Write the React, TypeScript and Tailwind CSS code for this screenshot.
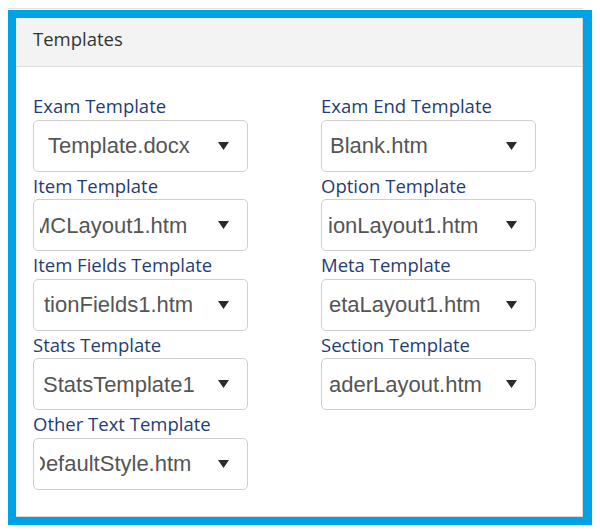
import React from "react";

type Field = {
  label: string;
  value: string;
  // nudge for the shown part of the file name, the box clips the rest
  shift: string;
};

const leftFields: Field[] = [
  { label: "Exam Template", value: "Template.docx", shift: "ml-[8px]" },
  { label: "Item Template", value: "MCLayout1.htm", shift: "ml-[-8px]" },
  { label: "Item Fields Template", value: "tionFields1.htm", shift: "ml-[4px]" },
  { label: "Stats Template", value: "StatsTemplate1", shift: "ml-[3px]" },
  { label: "Other Text Template", value: "DefaultStyle.htm", shift: "ml-[-10px]" },
];

const rightFields: Field[] = [
  { label: "Exam End Template", value: "Blank.htm", shift: "ml-[2px]" },
  { label: "Option Template", value: "ionLayout1.htm", shift: "ml-[0px]" },
  { label: "Meta Template", value: "etaLayout1.htm", shift: "ml-[1px]" },
  { label: "Section Template", value: "aderLayout.htm", shift: "ml-[1px]" },
];

const Caret = () => (
  <svg width="11" height="8" viewBox="0 0 11 8" className="shrink-0">
    <polygon points="0,0 11,0 5.5,8" fill="#2b2b2b" />
  </svg>
);

function TemplateSelect({ field }: { field: Field }) {
  return (
    <div className="flex flex-col">
      <div className="h-[27.5px] text-[18.5px] leading-[27.5px] text-[#1f3d73] font-['Open_Sans',sans-serif] whitespace-nowrap">
        {field.label}
      </div>
      <div className="flex h-[52px] w-[215px] items-center rounded-[5px] border border-[#cfcfcf] bg-white pl-[6px] pr-[18px]">
        <div className="flex w-[157px] overflow-hidden">
          <span
            className={`${field.shift} shrink-0 whitespace-nowrap text-[22px] text-[#555] font-['Liberation_Sans',Arial,sans-serif]`}
          >
            {field.value}
          </span>
        </div>
        <div className="ml-auto">
          <Caret />
        </div>
      </div>
    </div>
  );
}

export default function App() {
  return (
    <div className="h-[530px] w-[600px] bg-white pl-[8px] pt-[8px]">
      <div className="h-px w-[575px] bg-[#e2e2e2]" />
      <div className="mt-px h-[515px] w-[584px] border-[8px] border-r-[9px] border-[#00a2e6] bg-white">
        <div className="flex h-full flex-col border-r border-b border-[#d8d8d8]">
          <div className="h-[49px] border-b border-[#dcdcdc] bg-[#f3f3f3] pl-[17px] pt-[8px]">
            <span className="text-[18.5px] leading-[25px] text-[#333] font-['Open_Sans',sans-serif]">
              Templates
            </span>
          </div>
          <div className="grid grid-cols-[288px_1fr] pl-[17px] pt-[25px]">
            <div className="flex flex-col">
              {leftFields.map((f) => (
                <TemplateSelect key={f.label} field={f} />
              ))}
            </div>
            <div className="flex flex-col">
              {rightFields.map((f) => (
                <TemplateSelect key={f.label} field={f} />
              ))}
            </div>
          </div>
        </div>
      </div>
    </div>
  );
}
